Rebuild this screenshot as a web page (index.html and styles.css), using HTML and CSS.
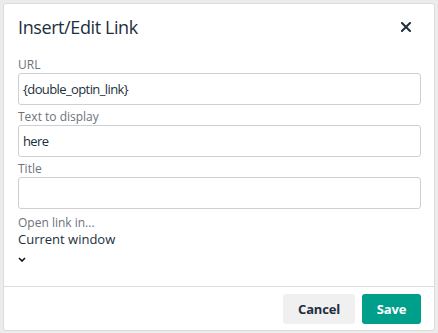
FILE: index.html
```html
<!DOCTYPE html>
<html lang="en">
<head>
    <meta charset="UTF-8">
    <title>Insert/Edit Link</title>
    <link rel="stylesheet" href="styles.css">
</head>
<body>
    <div class="dialog">
        <div class="dialog-header">
            <h1>Insert/Edit Link</h1>
            <button class="close" aria-label="Close">
                <svg width="10" height="10" viewBox="0 0 10 10">
                    <path d="M1 1L9 9M9 1L1 9" stroke="#222f3e" stroke-width="2" stroke-linecap="square"/>
                </svg>
            </button>
        </div>
        <div class="dialog-body">
            <label class="label">URL</label>
            <input class="field" type="text" value="{double_optin_link}">
            <label class="label">Text to display</label>
            <input class="field" type="text" value="here">
            <label class="label">Title</label>
            <input class="field" type="text" value="">
            <label class="label select-label">Open link in...</label>
            <div class="select-value">Current window</div>
            <div class="chevron">
                <svg width="8" height="5" viewBox="0 0 8 5">
                    <path d="M1 1L4 4L7 1" stroke="#111" stroke-width="1.6" fill="none"/>
                </svg>
            </div>
        </div>
        <div class="dialog-footer">
            <button class="btn btn-cancel">Cancel</button>
            <button class="btn btn-save">Save</button>
        </div>
    </div>
</body>
</html>
```

FILE: styles.css
```css
/* Page */
body {
    margin: 0;
    padding: 3px;
    background: #ececec;
    font-family: 'Open Sans', 'Noto Sans', sans-serif;
    color: #222f3e;
}
.dialog {
    width: 432px;
    height: 328px;
    box-sizing: border-box;
    background: #fff;
    border: 1px solid #dcdcdc;
    border-radius: 3px;
    display: flex;
    flex-direction: column;
}
/* Header */
.dialog-header {
    display: flex;
    align-items: center;
    justify-content: space-between;
    padding: 11px 23px 0 14px;
}
.dialog-header h1 {
    margin: 0;
    font-size: 18px;
    line-height: 24px;
    letter-spacing: -0.4px;
    font-weight: 400;
    color: #222f3e;
}
.close {
    border: 0;
    background: none;
    padding: 0;
    width: 10px;
    height: 10px;
    display: flex;
}
/* Body */
.dialog-body {
    flex: 1;
    display: flex;
    flex-direction: column;
    padding: 18px 13px 0 14px;
}
.label {
    font-size: 12px;
    line-height: 16px;
    color: #6d737a;
}
.field {
    box-sizing: border-box;
    height: 32px;
    margin: 0 0 4px;
    padding: 0 4px;
    border: 1px solid #cfcfcf;
    border-radius: 3px;
    font-family: inherit;
    font-size: 13px;
    letter-spacing: -0.6px;
    color: #222f3e;
    outline: none;
}
.select-label {
    margin-top: 2px;
}
.select-value {
    font-size: 13px;
    line-height: 16px;
    color: #222f3e;
}
.chevron {
    margin-top: 9px;
    height: 5px;
    line-height: 0;
}
/* Footer */
.dialog-footer {
    display: flex;
    justify-content: flex-end;
    gap: 7px;
    padding: 7px 13px 6px;
    border-top: 1px solid #dcdcdc;
}
.btn {
    height: 30px;
    border: 0;
    border-radius: 3px;
    font-family: inherit;
    font-size: 13px;
    letter-spacing: -0.2px;
    font-weight: 700;
    padding: 0;
}
.btn-cancel {
    background: #f0f0f0;
    color: #222f3e;
    width: 72px;
}
.btn-save {
    background: #009f8b;
    color: #fff;
    width: 59px;
}
```
